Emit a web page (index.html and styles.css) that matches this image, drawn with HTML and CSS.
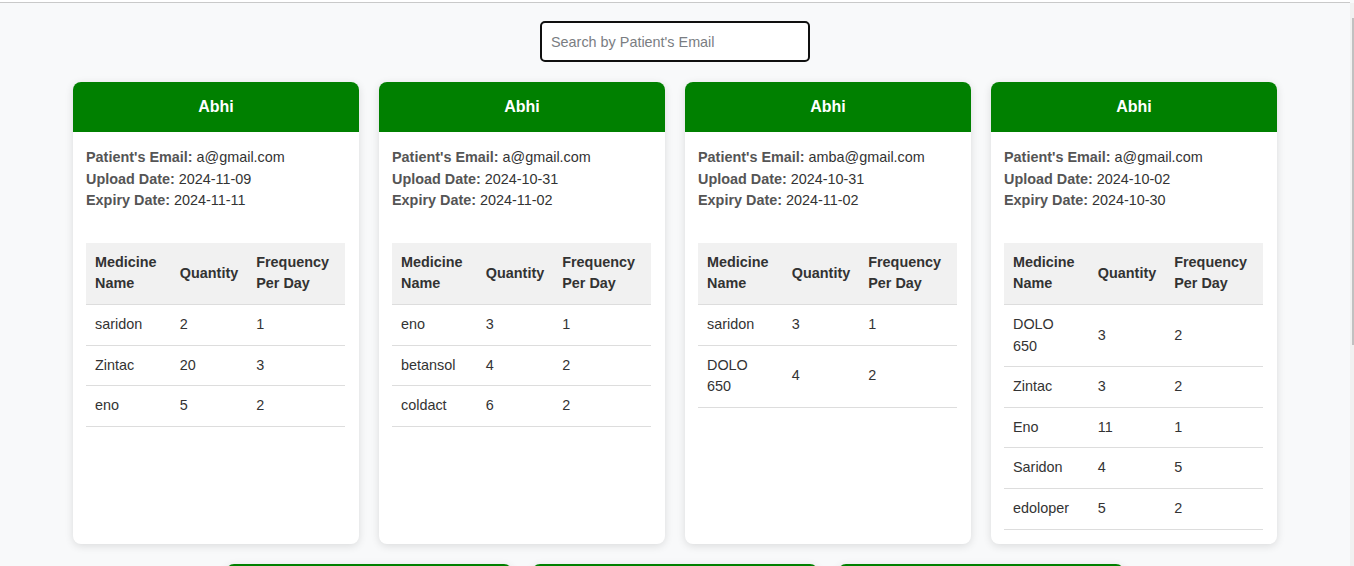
FILE: index.html
```html
<!DOCTYPE html>
<html lang="en">
<head>
<meta charset="utf-8">
<title>Prescriptions</title>
<link rel="stylesheet" href="styles.css">
</head>
<body>
<div class="topline"></div>
<div class="fake-scrollbar"><div class="fake-thumb"></div></div>
<main class="page">
  <div class="search-row">
    <input class="search" type="text" placeholder="Search by Patient's Email">
  </div>
  <section class="cards">
    <article class="card">
      <header class="card-head">Abhi</header>
      <div class="card-body">
        <p class="info"><b>Patient's Email:</b> a@gmail.com</p>
        <p class="info"><b>Upload Date:</b> 2024-11-09</p>
        <p class="info"><b>Expiry Date:</b> 2024-11-11</p>
        <table class="meds">
          <thead><tr><th>Medicine Name</th><th>Quantity</th><th>Frequency Per Day</th></tr></thead>
          <tbody>
            <tr><td>saridon</td><td>2</td><td>1</td></tr>
            <tr><td>Zintac</td><td>20</td><td>3</td></tr>
            <tr><td>eno</td><td>5</td><td>2</td></tr>
          </tbody>
        </table>
      </div>
    </article>
    <article class="card">
      <header class="card-head">Abhi</header>
      <div class="card-body">
        <p class="info"><b>Patient's Email:</b> a@gmail.com</p>
        <p class="info"><b>Upload Date:</b> 2024-10-31</p>
        <p class="info"><b>Expiry Date:</b> 2024-11-02</p>
        <table class="meds">
          <thead><tr><th>Medicine Name</th><th>Quantity</th><th>Frequency Per Day</th></tr></thead>
          <tbody>
            <tr><td>eno</td><td>3</td><td>1</td></tr>
            <tr><td>betansol</td><td>4</td><td>2</td></tr>
            <tr><td>coldact</td><td>6</td><td>2</td></tr>
          </tbody>
        </table>
      </div>
    </article>
    <article class="card">
      <header class="card-head">Abhi</header>
      <div class="card-body">
        <p class="info"><b>Patient's Email:</b> amba@gmail.com</p>
        <p class="info"><b>Upload Date:</b> 2024-10-31</p>
        <p class="info"><b>Expiry Date:</b> 2024-11-02</p>
        <table class="meds">
          <thead><tr><th>Medicine Name</th><th>Quantity</th><th>Frequency Per Day</th></tr></thead>
          <tbody>
            <tr><td>saridon</td><td>3</td><td>1</td></tr>
            <tr><td>DOLO 650</td><td>4</td><td>2</td></tr>
          </tbody>
        </table>
      </div>
    </article>
    <article class="card">
      <header class="card-head">Abhi</header>
      <div class="card-body">
        <p class="info"><b>Patient's Email:</b> a@gmail.com</p>
        <p class="info"><b>Upload Date:</b> 2024-10-02</p>
        <p class="info"><b>Expiry Date:</b> 2024-10-30</p>
        <table class="meds">
          <thead><tr><th>Medicine Name</th><th>Quantity</th><th>Frequency Per Day</th></tr></thead>
          <tbody>
            <tr><td>DOLO 650</td><td>3</td><td>2</td></tr>
            <tr><td>Zintac</td><td>3</td><td>2</td></tr>
            <tr><td>Eno</td><td>11</td><td>1</td></tr>
            <tr><td>Saridon</td><td>4</td><td>5</td></tr>
            <tr><td>edoloper</td><td>5</td><td>2</td></tr>
          </tbody>
        </table>
      </div>
    </article>
    <article class="card">
      <header class="card-head">Abhi</header>
      <div class="card-body">
        <p class="info"><b>Patient's Email:</b> a@gmail.com</p>
        <p class="info"><b>Upload Date:</b> 2024-09-28</p>
        <p class="info"><b>Expiry Date:</b> 2024-10-02</p>
        <table class="meds">
          <thead><tr><th>Medicine Name</th><th>Quantity</th><th>Frequency Per Day</th></tr></thead>
          <tbody>
            <tr><td>saridon</td><td>2</td><td>1</td></tr>
            <tr><td>eno</td><td>5</td><td>2</td></tr>
          </tbody>
        </table>
      </div>
    </article>
    <article class="card">
      <header class="card-head">Abhi</header>
      <div class="card-body">
        <p class="info"><b>Patient's Email:</b> amba@gmail.com</p>
        <p class="info"><b>Upload Date:</b> 2024-09-20</p>
        <p class="info"><b>Expiry Date:</b> 2024-09-25</p>
        <table class="meds">
          <thead><tr><th>Medicine Name</th><th>Quantity</th><th>Frequency Per Day</th></tr></thead>
          <tbody>
            <tr><td>Zintac</td><td>3</td><td>2</td></tr>
            <tr><td>coldact</td><td>6</td><td>2</td></tr>
          </tbody>
        </table>
      </div>
    </article>
    <article class="card">
      <header class="card-head">Abhi</header>
      <div class="card-body">
        <p class="info"><b>Patient's Email:</b> a@gmail.com</p>
        <p class="info"><b>Upload Date:</b> 2024-09-12</p>
        <p class="info"><b>Expiry Date:</b> 2024-09-15</p>
        <table class="meds">
          <thead><tr><th>Medicine Name</th><th>Quantity</th><th>Frequency Per Day</th></tr></thead>
          <tbody>
            <tr><td>eno</td><td>3</td><td>1</td></tr>
            <tr><td>betansol</td><td>4</td><td>2</td></tr>
          </tbody>
        </table>
      </div>
    </article>
  </section>
</main>
</body>
</html>
```
FILE: styles.css
```css
html {
  background: #f8f9fa;
}

body {
  margin: 0;
  padding-right: 4px;
  font-family: "Liberation Sans", Arial, sans-serif;
  color: #333;
  background: #f8f9fa;
}

.topline {
  height: 2px;
  background: #ffffff;
  border-bottom: 1px solid #c9c9c9;
}

/* overlay imitation of the browser's scrollbar at the right edge */
.fake-scrollbar {
  position: fixed;
  top: 3px;
  right: 0;
  bottom: 0;
  width: 4px;
  background: #f1f1f1;
}

.fake-thumb {
  margin: 15px 0 0 2px;
  width: 2px;
  height: 327px;
  background: #c1c1c1;
}

.page {
  padding: 18px 0 20px;
}

.search-row {
  display: flex;
  justify-content: center;
  margin-bottom: 20px;
}

.search {
  box-sizing: border-box;
  width: 270px;
  height: 41px;
  padding: 10px 9px;
  border: 2px solid #101010;
  border-radius: 5px;
  background: #fff;
  font-family: "Liberation Sans", Arial, sans-serif;
  font-size: 14.4px;
  color: #333;
  outline: none;
}

.search::placeholder {
  color: #7a7d82;
}

.cards {
  display: flex;
  flex-wrap: wrap;
  justify-content: center;
  gap: 20px;
}

.card {
  width: 286px;
  background: #fff;
  border-radius: 8px;
  box-shadow: 0 2px 8px rgba(0, 0, 0, 0.12);
  overflow: hidden;
}

.card-head {
  height: 50px;
  display: flex;
  align-items: center;
  justify-content: center;
  background: #008000;
  color: #fff;
  font-weight: bold;
  font-size: 16px;
}

.card-body {
  padding: 15px 14px 14px 13px;
  font-size: 14.4px;
  line-height: 1.5;
}

.info {
  margin: 0;
  color: #333;
}

.info b {
  color: #555;
}

.meds {
  width: 100%;
  margin-top: 31px;
  border-collapse: collapse;
  font-size: 14.4px;
  line-height: 1.5;
}

.meds th,
.meds td {
  padding: 9px 9px;
  text-align: left;
  border-bottom: 1px solid #ddd;
  color: #333;
}

.meds th {
  background: #f1f1f1;
  font-weight: bold;
}
```
